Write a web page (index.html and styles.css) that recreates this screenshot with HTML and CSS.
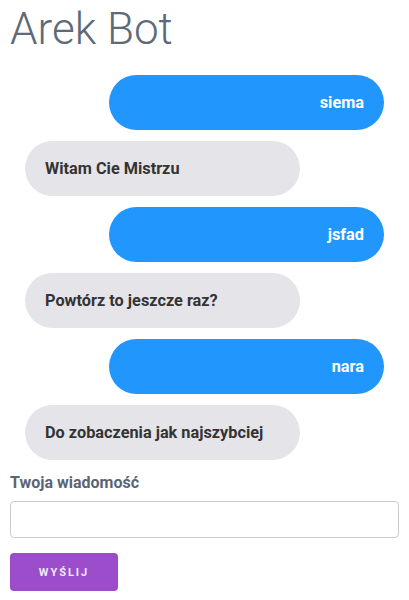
FILE: index.html
```html
<!DOCTYPE html>
<html lang="pl">
<head>
<meta charset="utf-8">
<title>Arek Bot</title>
<link rel="stylesheet" href="styles.css">
</head>
<body>
<div class="app">
  <h1 class="title">Arek Bot</h1>
  <div class="chat">
    <div class="msg msg-user">siema</div>
    <div class="msg msg-bot">Witam Cie Mistrzu</div>
    <div class="msg msg-user">jsfad</div>
    <div class="msg msg-bot">Powtórz to jeszcze raz?</div>
    <div class="msg msg-user">nara</div>
    <div class="msg msg-bot">Do zobaczenia jak najszybciej</div>
  </div>
  <form class="form">
    <label class="label" for="msg">Twoja wiadomość</label>
    <input class="input" id="msg" type="text">
    <button class="btn" type="button">Wyślij</button>
  </form>
</div>
</body>
</html>
```
FILE: styles.css
```css
* { box-sizing: border-box; }
html, body { margin: 0; padding: 0; background: #fff; }
body { font-family: Roboto, "Liberation Sans", sans-serif; }
.app { padding: 0 10px; }
.title {
  margin: 0;
  padding-top: 3px;
  font-weight: 300;
  font-size: 44px;
  line-height: 52px;
  color: #5d6a77;
}
.chat {
  display: flex;
  flex-direction: column;
  gap: 11px;
  margin-top: 20px;
  padding: 0 15px;
}
.msg {
  width: 275px;
  height: 55px;
  border-radius: 28px;
  display: flex;
  align-items: center;
  font-weight: 700;
  font-size: 16.3px;
  padding: 0 20px;
}
.msg-user {
  align-self: flex-end;
  justify-content: flex-end;
  background: #2196fd;
  color: #fff;
}
.msg-bot {
  align-self: flex-start;
  background: #e5e4e9;
  color: #333;
}
.form { display: flex; flex-direction: column; align-items: flex-start; margin-top: 13px; }
.label {
  font-weight: 700;
  font-size: 16px;
  color: #5a6573;
  line-height: 20px;
}
.input {
  margin-top: 8px;
  width: 100%;
  height: 37px;
  border: 1px solid #ccc;
  border-radius: 4px;
  font: inherit;
  padding: 0 10px;
}
.btn {
  margin-top: 15px;
  width: 108px;
  height: 38px;
  border: none;
  border-radius: 4px;
  background: #9c4dcc;
  color: #f3eaf8;
  font-family: Roboto, "Liberation Sans", sans-serif;
  font-weight: 700;
  font-size: 11px;
  letter-spacing: 2px;
  text-transform: uppercase;
}
```
